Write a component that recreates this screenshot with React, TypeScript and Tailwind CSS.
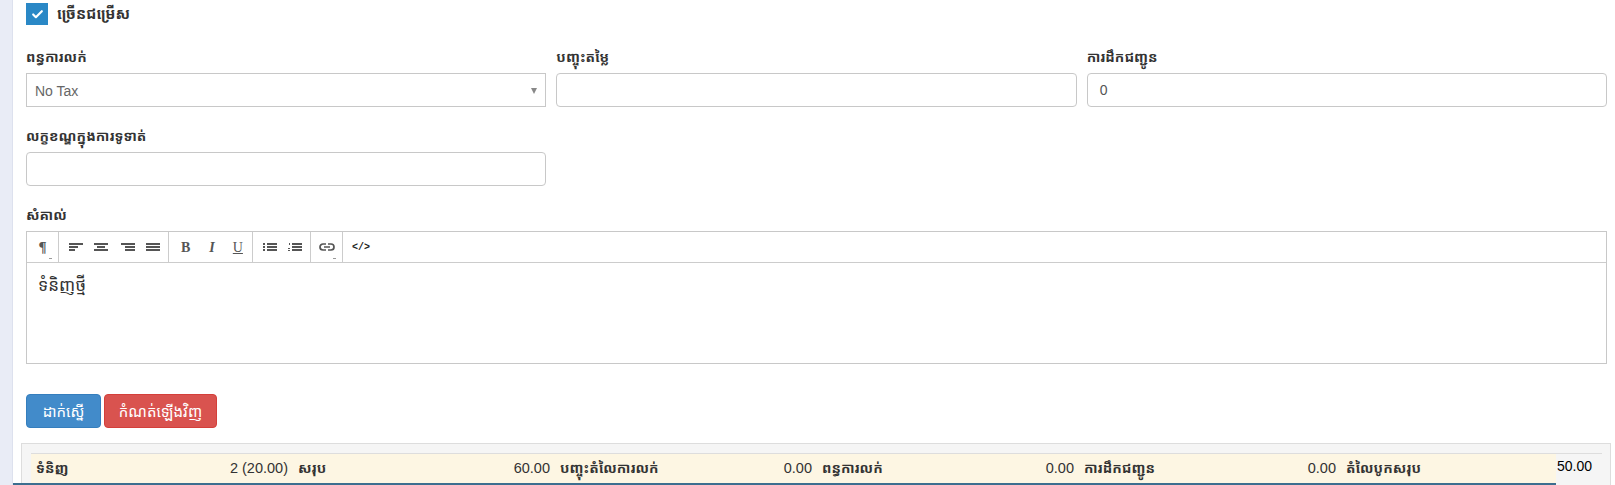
import { Check } from "lucide-react";

const khmer = "font-['Noto_Sans_Khmer','Noto_Sans','Liberation_Sans',sans-serif]";

const totals = [
  { label: "ទំនិញ", value: "2 (20.00)" },
  { label: "សរុប", value: "60.00" },
  { label: "បញ្ចុះតំលៃការលក់", value: "0.00" },
  { label: "ពន្ធការលក់", value: "0.00" },
  { label: "ការដឹកជញ្ជូន", value: "0.00" },
  { label: "តំលៃបូកសរុប", value: "50.00" },
];

function Bars({ rows }: { rows: [number, number, number][] }) {
  return (
    <svg width="14" height="12" viewBox="0 0 14 12" fill="#555" className="shrink-0">
      {rows.map(([x, y, w], i) => (
        <rect key={i} x={x} y={y} width={w} height="2" />
      ))}
    </svg>
  );
}

function Label({ children }: { children: React.ReactNode }) {
  return <label className="block h-[28px] text-[14px] leading-[24px] font-bold text-[#333]">{children}</label>;
}

function Toolbar() {
  return (
    <div className="flex h-[30px] items-center border-b border-[#ccc] text-[#555] box-content">
      <div className="relative flex h-full w-[32px] items-center justify-center border-r border-[#ccc] text-[15px] font-bold font-['Liberation_Serif',serif]">
        ¶<span className="absolute right-[6px] bottom-[3px] h-[1px] w-[3px] bg-[#999]" />
      </div>
      <div className="flex h-full w-[110px] items-center gap-[11px] border-r border-[#ccc] pl-[10px]">
        <Bars rows={[[0, 2, 14], [0, 5, 9], [0, 8, 6]]} />
        <Bars rows={[[0, 2, 14], [3, 5, 8], [0, 8, 14]]} />
        <span className="ml-[2px]">
          <Bars rows={[[0, 2, 14], [4, 5, 10], [4, 8, 10]]} />
        </span>
        <Bars rows={[[0, 2, 14], [0, 5, 14], [0, 8, 14]]} />
      </div>
      <div className="flex h-full w-[84px] items-center border-r border-[#ccc] pl-[12px] text-[14px] font-['Liberation_Serif',serif]">
        <span className="font-bold">B</span>
        <span className="ml-[19px] font-bold italic">I</span>
        <span className="ml-[18px] underline">U</span>
      </div>
      <div className="flex h-full w-[58px] items-center gap-[11px] border-r border-[#ccc] pl-[10px]">
        <svg width="14" height="12" viewBox="0 0 14 12" fill="#555" className="shrink-0">
          <rect x="0" y="2" width="2" height="2" />
          <rect x="0" y="5" width="2" height="2" />
          <rect x="0" y="8" width="2" height="2" />
          <rect x="4" y="2" width="10" height="2" />
          <rect x="4" y="5" width="10" height="2" />
          <rect x="4" y="8" width="10" height="2" />
        </svg>
        <svg width="14" height="12" viewBox="0 0 14 12" fill="#555" className="shrink-0">
          <rect x="1" y="2" width="1" height="2" />
          <rect x="0" y="7" width="2" height="1" />
          <rect x="0" y="9" width="2" height="1" />
          <rect x="4" y="2" width="10" height="2" />
          <rect x="4" y="5" width="10" height="2" />
          <rect x="4" y="8" width="10" height="2" />
        </svg>
      </div>
      <div className="relative flex h-full w-[32px] items-center justify-center border-r border-[#ccc]">
        <svg width="16" height="10" viewBox="0 0 16 10" fill="none" stroke="#555" strokeWidth="1.7">
          <path d="M7 2H4a3 3 0 0 0 0 6h3M9 2h3a3 3 0 0 1 0 6H9M5 5h6" />
        </svg>
        <span className="absolute right-[6px] bottom-[3px] h-[1px] w-[3px] bg-[#999]" />
      </div>
      <div className="flex h-full items-center pl-[9px] text-[10px] font-bold text-[#222] font-['Liberation_Mono',monospace]">
        &lt;/&gt;
      </div>
    </div>
  );
}

export default function App() {
  return (
    <div className={`flex h-[485px] w-[1615px] overflow-hidden bg-white ${khmer}`}>
      <div className="w-[13px] shrink-0 border-r border-[#dde1ee] bg-[#e9ecf6]" />
      <div className="relative flex-1 pr-[8px] pl-[13px]">
        <div className="flex h-[27px] items-start gap-[9px] pt-[3px]">
          <span className="flex h-[22px] w-[22px] items-center justify-center bg-[#2a88c6]">
            <Check size={13} strokeWidth={4} className="text-white" />
          </span>
          <span className="text-[15px] leading-[20px] font-bold text-[#333]">ច្រើនជម្រើស</span>
        </div>
        <div className="mt-[18px] grid grid-cols-3 gap-x-[10px]">
          <div>
            <Label>ពន្ធការលក់</Label>
            <div className="flex h-[34px] items-center justify-between border border-[#c8c8c8] pt-[2px] pr-[8px] pl-[8px] text-[14px] text-[#666] font-['Liberation_Sans',sans-serif]">
              No Tax
              <span className="h-0 w-0 border-x-[3.5px] border-t-[6px] border-x-transparent border-t-[#888]" />
            </div>
          </div>
          <div>
            <Label>បញ្ចុះតម្លៃ</Label>
            <div className="h-[34px] rounded-[4px] border border-[#c8c8c8]" />
          </div>
          <div>
            <Label>ការដឹកជញ្ជូន</Label>
            <div className="flex h-[34px] items-center rounded-[4px] border border-[#c8c8c8] px-[12px] text-[14px] text-[#555] font-['Liberation_Sans',sans-serif]">
              0
            </div>
          </div>
        </div>
        <div className="mt-[17px] grid grid-cols-3 gap-x-[10px]">
          <div>
            <Label>លក្ខខណ្ឌក្នុងការទូទាត់</Label>
            <div className="h-[34px] rounded-[4px] border border-[#c8c8c8]" />
          </div>
        </div>
        <div className="mt-[17px]">
          <Label>សំគាល់</Label>
          <div className="h-[133px] border border-[#c8c8c8]">
            <Toolbar />
            <div className="px-[11px] pt-[10px] text-[17px] leading-[24px] text-[#333]">ទំនិញថ្មី</div>
          </div>
        </div>
        <div className="mt-[30px] flex gap-[3px]">
          <button className="h-[34px] w-[75px] rounded-[4px] border border-[#357ebd] bg-[#428bca] text-[15px] text-white">
            ដាក់ស្នើ
          </button>
          <button className="h-[34px] w-[113px] rounded-[4px] border border-[#d43f3a] bg-[#d9534f] text-[15px] text-white">
            កំណត់ឡើងវិញ
          </button>
        </div>
        <div className="mt-[15px] mr-[-4px] ml-[-5px] h-[60px] border border-[#ddd] bg-[#f5f5f5] pt-[9px] pl-[9px]">
          <div className="w-[1571px] border-t border-[#ddd]">
            <div className="h-[32px] w-[1525px] bg-[#fdf6e3]">
              <div className="grid w-[1572px] grid-cols-6 text-[14px] leading-[28px] text-[#333]">
                {totals.map((t, i) => (
                  <div key={t.label} className="flex justify-between px-[5px]">
                    <span className="font-bold">{t.label}</span>
                    <span
                      className={
                        i === 5
                          ? "mr-[6px] mt-[-2px] text-black font-['Liberation_Sans',sans-serif]"
                          : "text-[14.5px] font-['Liberation_Sans',sans-serif]"
                      }
                    >
                      {t.value}
                    </span>
                  </div>
                ))}
              </div>
            </div>
          </div>
        </div>
        <div className="absolute bottom-0 left-0 h-[2px] w-[1543px] bg-[#3c6e8f]" />
      </div>
    </div>
  );
}
